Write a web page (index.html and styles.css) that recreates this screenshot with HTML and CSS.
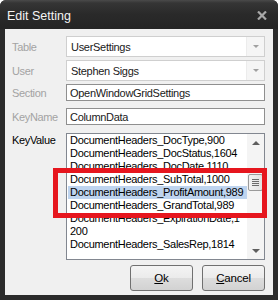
FILE: index.html
```html
<!DOCTYPE html>
<html lang="en">
<head>
    <meta charset="UTF-8">
    <title>Edit Setting</title>
    <link rel="stylesheet" href="styles.css">
</head>
<body>

<div class="window">
    <div class="titlebar">
        <span class="title">Edit Setting</span>
        <svg class="close" width="10" height="9" viewBox="0 0 10 9">
            <path d="M1 0.5 L9 8.5 M9 0.5 L1 8.5" stroke="#a8a8a8" stroke-width="2.2" fill="none"/>
        </svg>
    </div>

    <div class="client">
        <div class="row row-table">
            <label class="lbl off">Table</label>
            <div class="combo"><span class="val">UserSettings</span><span class="drop"><i class="arrow"></i></span></div>
        </div>
        <div class="row row-user">
            <label class="lbl off">User</label>
            <div class="combo"><span class="val">Stephen Siggs</span><span class="drop"><i class="arrow"></i></span></div>
        </div>
        <div class="row row-section">
            <label class="lbl off">Section</label>
            <div class="textbox">OpenWindowGridSettings</div>
        </div>
        <div class="row row-key">
            <label class="lbl off">KeyName</label>
            <div class="textbox">ColumnData</div>
        </div>
        <div class="row row-value">
            <label class="lbl">KeyValue</label>
            <div class="listbox">
                <div class="items">
                    <div class="item">DocumentHeaders_DocType,900</div>
                    <div class="item">DocumentHeaders_DocStatus,1604</div>
                    <div class="item">DocumentHeaders_DocDate,1110</div>
                    <div class="item">DocumentHeaders_SubTotal,1000</div>
                    <div class="item selected">DocumentHeaders_ProfitAmount,989</div>
                    <div class="item">DocumentHeaders_GrandTotal,989</div>
                    <div class="item">DocumentHeaders_ExpirationDate,1<br>200</div>
                    <div class="item">DocumentHeaders_SalesRep,1814</div>
                </div>
                <div class="scrollbar">
                    <div class="sb-btn"><i class="arrow up"></i></div>
                    <div class="track">
                        <div class="thumb"><span></span><span></span><span></span><span></span></div>
                    </div>
                    <div class="sb-btn"><i class="arrow"></i></div>
                </div>
            </div>
        </div>

        <div class="buttons">
            <button class="btn"><u>O</u>k</button>
            <button class="btn"><u>C</u>ancel</button>
        </div>
    </div>

    <div class="callout"></div>
</div>

</body>
</html>
```

FILE: styles.css
```css
body {
    margin: 0;
    background: #ffffff;
    font-family: "Liberation Sans", Arial, sans-serif;
}
.window {
    position: relative;
    width: 278px;
    height: 300px;
    box-sizing: border-box;
    background: #2b2b2b;
    border-radius: 6px 6px 0 0;
    padding: 0 5px 5px 5px;
    display: flex;
    flex-direction: column;
}
.titlebar {
    height: 29px;
    margin: 0 -5px;
    padding: 0 11px 0 7px;
    border-radius: 6px 6px 0 0;
    background: linear-gradient(#4a4a4a 0, #353535 3px, #2a2a2a 14px, #242424 29px);
    display: flex;
    align-items: center;
    justify-content: space-between;
}
.title {
    color: #f4f4f4;
    font-size: 12.5px;
    padding-top: 2px;
}
.close {
    display: block;
    margin-top: 2px;
}
.client {
    flex: 1;
    background: #f0f0f0;
    padding: 7px 8px 0 7px;
    display: flex;
    flex-direction: column;
}
.row {
    display: flex;
    align-items: center;
}
.row-user { margin-top: 3px; }
.row-section { margin-top: 3px; }
.row-key { margin-top: 7px; }
.row-value {
    margin-top: 8px;
    align-items: flex-start;
}
.lbl {
    width: 54px;
    font-size: 11px;
    letter-spacing: -0.35px;
    color: #000000;
}
.lbl.off {
    color: #a3a3a3;
}
.row-value .lbl {
    padding-top: 1px;
}
.combo, .textbox {
    width: 199px;
    box-sizing: border-box;
    background: #ffffff;
    font-size: 11px;
    letter-spacing: -0.3px;
    color: #202020;
    display: flex;
    align-items: center;
}
.combo {
    height: 21px;
    border: 1px solid #cfcfcf;
}
.combo .val {
    flex: 1;
    padding-left: 4px;
}
.drop {
    width: 17px;
    height: 19px;
    background: #f5f5f5;
    border-left: 1px solid #ececec;
    display: flex;
    align-items: center;
    justify-content: center;
}
.arrow {
    display: block;
    width: 0;
    height: 0;
    border-left: 3px solid transparent;
    border-right: 3px solid transparent;
    border-top: 3px solid #a0a0a0;
}
.textbox {
    height: 17px;
    border: 1px solid #8f8f8f;
    padding-left: 3px;
}
.listbox {
    width: 199px;
    height: 127px;
    box-sizing: border-box;
    border: 1px solid #828790;
    background: #ffffff;
    display: flex;
    overflow: hidden;
}
.items {
    flex: 1;
    padding-left: 1px;
}
.item {
    font-size: 11px;
    line-height: 13px;
    letter-spacing: -0.3px;
    padding-left: 2px;
    color: #000000;
    white-space: nowrap;
}
.item.selected {
    background: #bed4ef;
}
.scrollbar {
    width: 17px;
    display: flex;
    flex-direction: column;
    background: #f4f4f4;
}
.sb-btn {
    height: 17px;
    display: flex;
    align-items: center;
    justify-content: center;
}
.sb-btn .arrow {
    border-left-width: 4px;
    border-right-width: 4px;
    border-top: 4px solid #5e5e5e;
}
.sb-btn .arrow.up {
    border-top: 0;
    border-bottom: 4px solid #5e5e5e;
}
.track {
    flex: 1;
    padding: 23px 1px 0 1px;
}
.thumb {
    height: 17px;
    box-sizing: border-box;
    border: 1px solid #9a9a9a;
    border-radius: 2px;
    background: linear-gradient(to right, #f2f2f2, #e2e2e2);
    display: flex;
    flex-direction: column;
    align-items: center;
    justify-content: center;
    gap: 1px;
}
.thumb span {
    display: block;
    width: 7px;
    height: 1px;
    background: #6b6b6b;
}
.buttons {
    display: flex;
    justify-content: flex-end;
    gap: 9px;
    margin-top: 5px;
}
.btn {
    width: 63px;
    height: 26px;
    border: 1px solid #707070;
    border-radius: 3px;
    background: linear-gradient(#f4f4f4 0, #ebebeb 50%, #dddddd 51%, #d2d2d2 100%);
    font-family: "Liberation Sans", Arial, sans-serif;
    font-size: 11.5px;
    letter-spacing: -0.2px;
    color: #000000;
    padding: 0;
}
.callout {
    position: absolute;
    left: 53px;
    top: 168px;
    width: 214px;
    height: 50px;
    box-sizing: border-box;
    border: 5px solid #e6161e;
}
```
